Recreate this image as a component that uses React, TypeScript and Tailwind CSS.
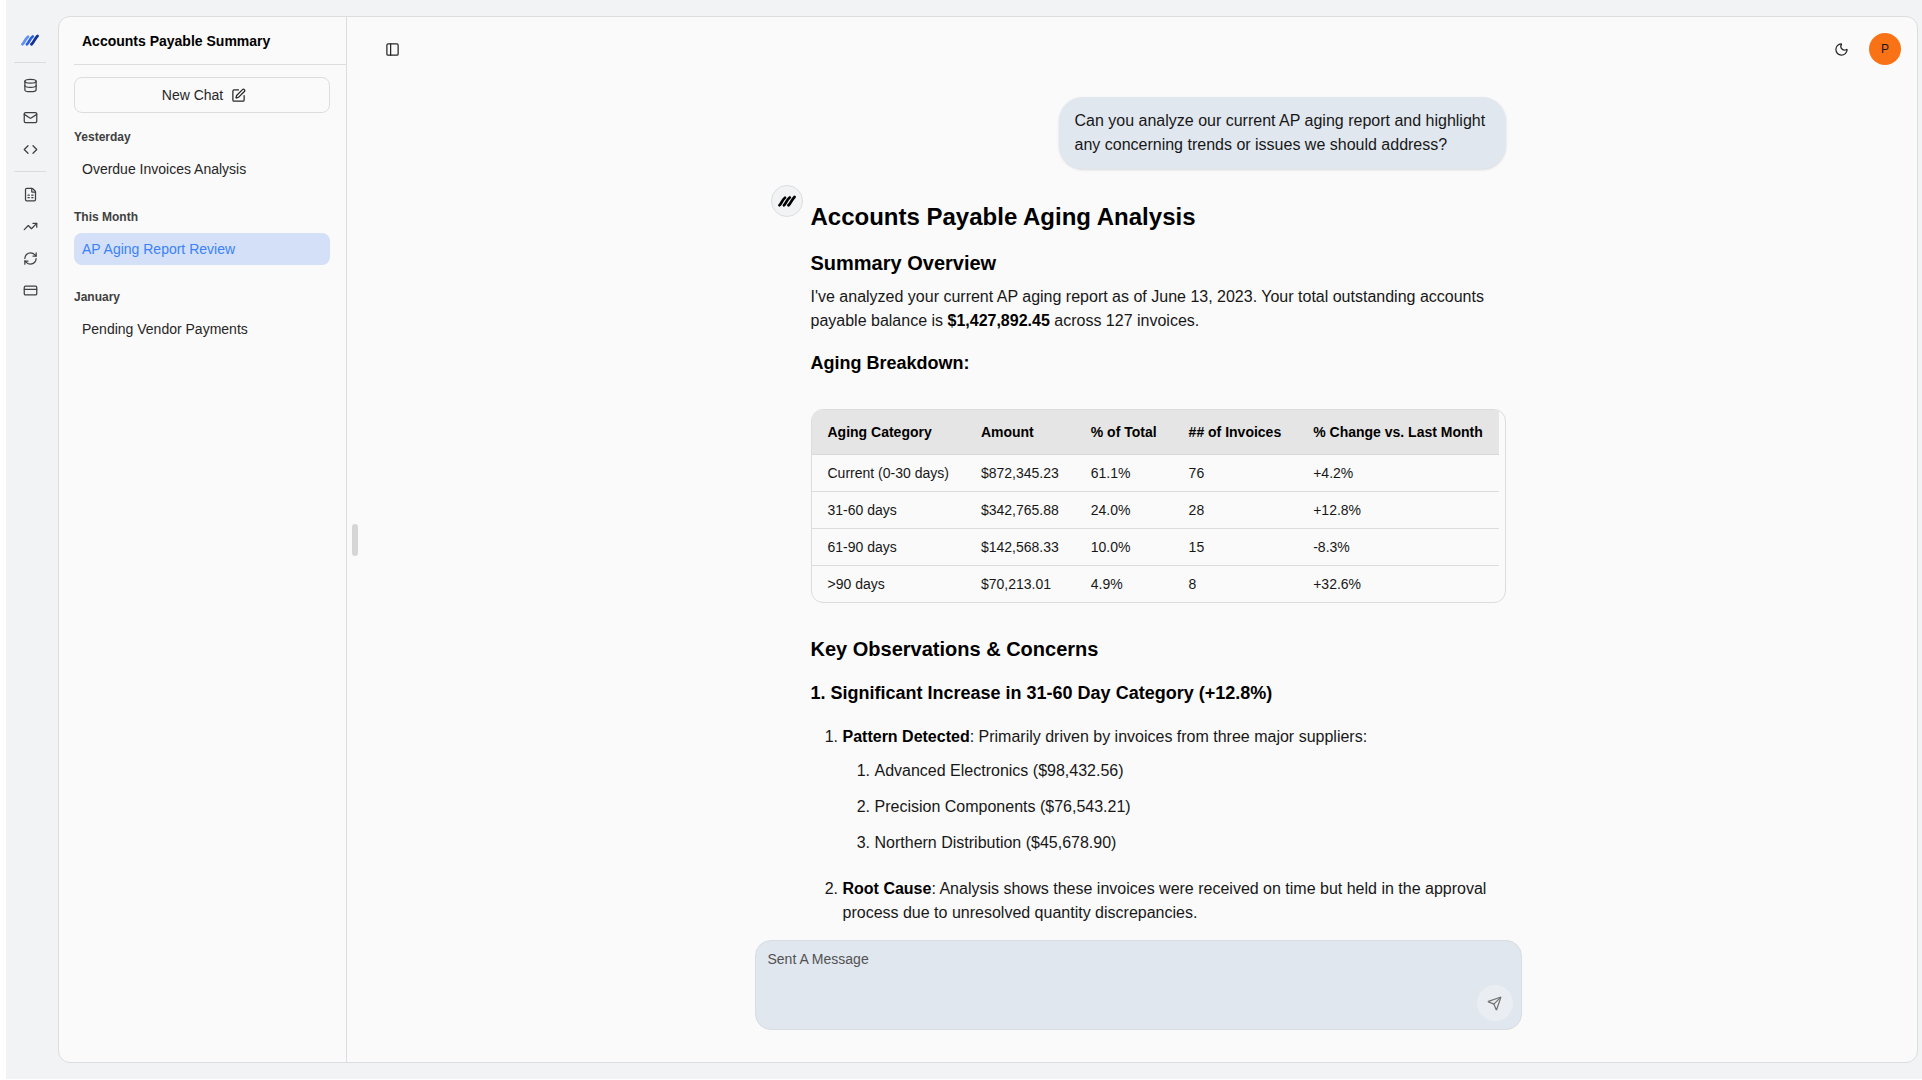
import type { ReactNode } from "react";
import {
  Database,
  Mail,
  Code,
  FileSpreadsheet,
  TrendingUp,
  RefreshCw,
  CreditCard,
  PanelLeft,
  Moon,
  Send,
  SquarePen,
} from "lucide-react";

function Logo({ colors, className }: { colors: string[]; className: string }) {
  return (
    <svg viewBox="0 0 36 24" className={className} fill="none" strokeLinecap="round" aria-hidden="true">
      <path d="M3 20.5C7 17.5 8 10 14 5.5" stroke={colors[0]} strokeWidth="5.5" />
      <path d="M12 20.5C16 17 17.5 9.5 23.5 5" stroke={colors[1]} strokeWidth="5.5" />
      <path d="M21 20.5C26 17 27 9.5 33 4" stroke={colors[2]} strokeWidth="5.5" />
    </svg>
  );
}

function RailButton({ label, children }: { label: string; children: ReactNode }) {
  return (
    <button
      type="button"
      aria-label={label}
      className="flex size-8 items-center justify-center rounded-md text-neutral-700 [&>svg]:size-[15px]"
    >
      {children}
    </button>
  );
}

function ChatGroup({ label, title, active }: { label: string; title: string; active?: boolean }) {
  return (
    <section>
      <h3 className="text-xs leading-4 font-bold text-neutral-700">{label}</h3>
      <a
        href="#"
        className={
          active
            ? "mt-2 flex h-8 items-center rounded-lg bg-[#d3e0f8] px-2 text-sm text-[#3b82f6]"
            : "mt-2 flex h-8 items-center rounded-lg px-2 text-sm text-neutral-800"
        }
      >
        {title}
      </a>
    </section>
  );
}

const columns = ["Aging Category", "Amount", "% of Total", "## of Invoices", "% Change vs. Last Month"];
const rows = [
  ["Current (0-30 days)", "$872,345.23", "61.1%", "76", "+4.2%"],
  ["31-60 days", "$342,765.88", "24.0%", "28", "+12.8%"],
  ["61-90 days", "$142,568.33", "10.0%", "15", "-8.3%"],
  [">90 days", "$70,213.01", "4.9%", "8", "+32.6%"],
];

function AgingTable() {
  return (
    <div className="mt-8 overflow-hidden rounded-xl border border-[#dcdcdc]">
      <table className="border-collapse text-left text-sm whitespace-nowrap">
        <thead className="bg-[#e5e5e5]">
          <tr className="border-b border-[#d8d8d8]">
            {columns.map((c) => (
              <th key={c} scope="col" className="px-4 py-3 font-bold text-black">
                {c}
              </th>
            ))}
          </tr>
        </thead>
        <tbody>
          {rows.map((r) => (
            <tr key={r[0]} className="border-b border-[#dcdcdc] last:border-b-0">
              {r.map((cell) => (
                <td key={cell} className="px-4 py-2">
                  {cell}
                </td>
              ))}
            </tr>
          ))}
        </tbody>
      </table>
    </div>
  );
}

export default function App() {
  return (
    <div className="h-screen bg-white pb-px pl-1.5 font-['Liberation_Sans',Arial,sans-serif] text-neutral-900">
      <div className="flex h-full bg-[#f2f3f5] pr-1">
        <nav aria-label="Main" className="flex w-12 shrink-0 flex-col items-center pt-6">
          <a href="#" aria-label="Home" className="flex size-8 items-center justify-center">
            <Logo colors={["#5b8ff5", "#2c5fe0", "#12308f"]} className="h-3 w-[18px]" />
          </a>
          <hr className="my-1.5 w-8 border-[#dcdcdc]" />
          <RailButton label="Data"><Database /></RailButton>
          <RailButton label="Mail"><Mail /></RailButton>
          <RailButton label="Code"><Code /></RailButton>
          <hr className="my-1.5 w-8 border-[#dcdcdc]" />
          <RailButton label="Reports"><FileSpreadsheet /></RailButton>
          <RailButton label="Trends"><TrendingUp /></RailButton>
          <RailButton label="Sync"><RefreshCw /></RailButton>
          <RailButton label="Payments"><CreditCard /></RailButton>
        </nav>

        <div className="my-4 ml-1 flex min-w-0 flex-1 overflow-hidden rounded-xl border border-[#dcdddf] bg-[#fafafa]">
          <aside className="flex w-72 shrink-0 flex-col border-r border-[#dcdddf] pl-[15px]">
            <h2 className="flex h-12 items-center border-b border-[#dcdddf] px-2 text-sm font-bold text-black">
              Accounts Payable Summary
            </h2>
            <div className="flex flex-col pt-3 pr-4">
              <button
                type="button"
                className="flex h-9 items-center justify-center gap-2 rounded-lg border border-[#dcdddf] pl-1 text-sm text-neutral-800"
              >
                New Chat
                <SquarePen className="size-[15px]" />
              </button>
              <div className="mt-4 flex flex-col gap-6">
                <ChatGroup label="Yesterday" title="Overdue Invoices Analysis" />
                <ChatGroup label="This Month" title="AP Aging Report Review" active />
                <ChatGroup label="January" title="Pending Vendor Payments" />
              </div>
            </div>
          </aside>

          <div className="flex w-3 shrink-0 items-center justify-end pr-px">
            <div className="h-8 w-1.5 rounded-sm bg-[#d6d6d6]" />
          </div>

          <main className="flex min-w-0 flex-1 flex-col">
            <header className="flex h-16 shrink-0 items-center justify-between pr-4 pl-[17px]">
              <button type="button" aria-label="Toggle sidebar" className="flex size-8 items-center justify-center text-neutral-800">
                <PanelLeft className="size-[15px]" />
              </button>
              <div className="flex items-center gap-3">
                <button type="button" aria-label="Toggle theme" className="flex size-8 items-center justify-center text-neutral-800">
                  <Moon className="size-[15px]" />
                </button>
                <button type="button" aria-label="Profile" className="size-8 rounded-full bg-[#f97316] text-xs text-neutral-900">
                  P
                </button>
              </div>
            </header>

            <div className="min-h-0 flex-1 overflow-hidden">
              <div className="mx-auto flex max-w-[767px] flex-col gap-4 px-4 pt-4">
                <p className="w-fit max-w-[447px] self-end rounded-3xl bg-[#e1e7ef] px-4 py-3 text-base shadow-sm">
                  Can you analyze our current AP aging report and highlight any concerning trends or issues we should
                  address?
                </p>

                <article className="flex gap-2">
                  <div className="flex size-8 shrink-0 items-center justify-center rounded-full border border-[#dcdddf] bg-[#f2f3f5]">
                    <Logo colors={["#000000", "#000000", "#000000"]} className="h-3 w-[18px]" />
                  </div>
                  <div className="min-w-0 flex-1 pt-4 text-base">
                    <h1 className="text-2xl font-bold text-black">Accounts Payable Aging Analysis</h1>
                    <h2 className="mt-4 text-xl font-bold text-black">Summary Overview</h2>
                    <p className="mt-2">
                      I've analyzed your current AP aging report as of June 13, 2023. Your total outstanding accounts
                      payable balance is <strong className="text-black">$1,427,892.45</strong> across 127 invoices.
                    </p>
                    <h3 className="mt-4 text-lg font-bold text-black">Aging Breakdown:</h3>
                    <AgingTable />
                    <h2 className="mt-8 text-xl font-bold text-black">Key Observations &amp; Concerns</h2>
                    <h3 className="mt-4 text-lg font-bold text-black">
                      1. Significant Increase in 31-60 Day Category (+12.8%)
                    </h3>
                    <ol className="mt-[18px] list-decimal pl-8">
                      <li>
                        <strong className="text-black">Pattern Detected</strong>: Primarily driven by invoices from
                        three major suppliers:
                        <ol className="mt-2.5 flex list-decimal flex-col gap-3 pl-8">
                          <li>Advanced Electronics ($98,432.56)</li>
                          <li>Precision Components ($76,543.21)</li>
                          <li>Northern Distribution ($45,678.90)</li>
                        </ol>
                      </li>
                      <li className="mt-[22px]">
                        <strong className="text-black">Root Cause</strong>: Analysis shows these invoices were received
                        on time but held in the approval process due to unresolved quantity discrepancies.
                      </li>
                    </ol>
                  </div>
                </article>
              </div>
            </div>

            <form className="mx-auto mb-8 flex w-full max-w-[767px] shrink-0 rounded-2xl border border-[#d9dce0] bg-[#e1e7ef] pr-2">
              <textarea
                aria-label="Message"
                placeholder="Sent A Message"
                className="h-[88px] min-w-0 flex-1 resize-none bg-transparent px-3 py-2 text-sm outline-none placeholder:text-neutral-600"
              />
              <button
                type="button"
                aria-label="Send"
                className="mb-2 flex size-9 items-center justify-center self-end rounded-full bg-[#eaedf2] text-neutral-500"
              >
                <Send className="size-[15px]" />
              </button>
            </form>
          </main>
        </div>
      </div>
    </div>
  );
}
